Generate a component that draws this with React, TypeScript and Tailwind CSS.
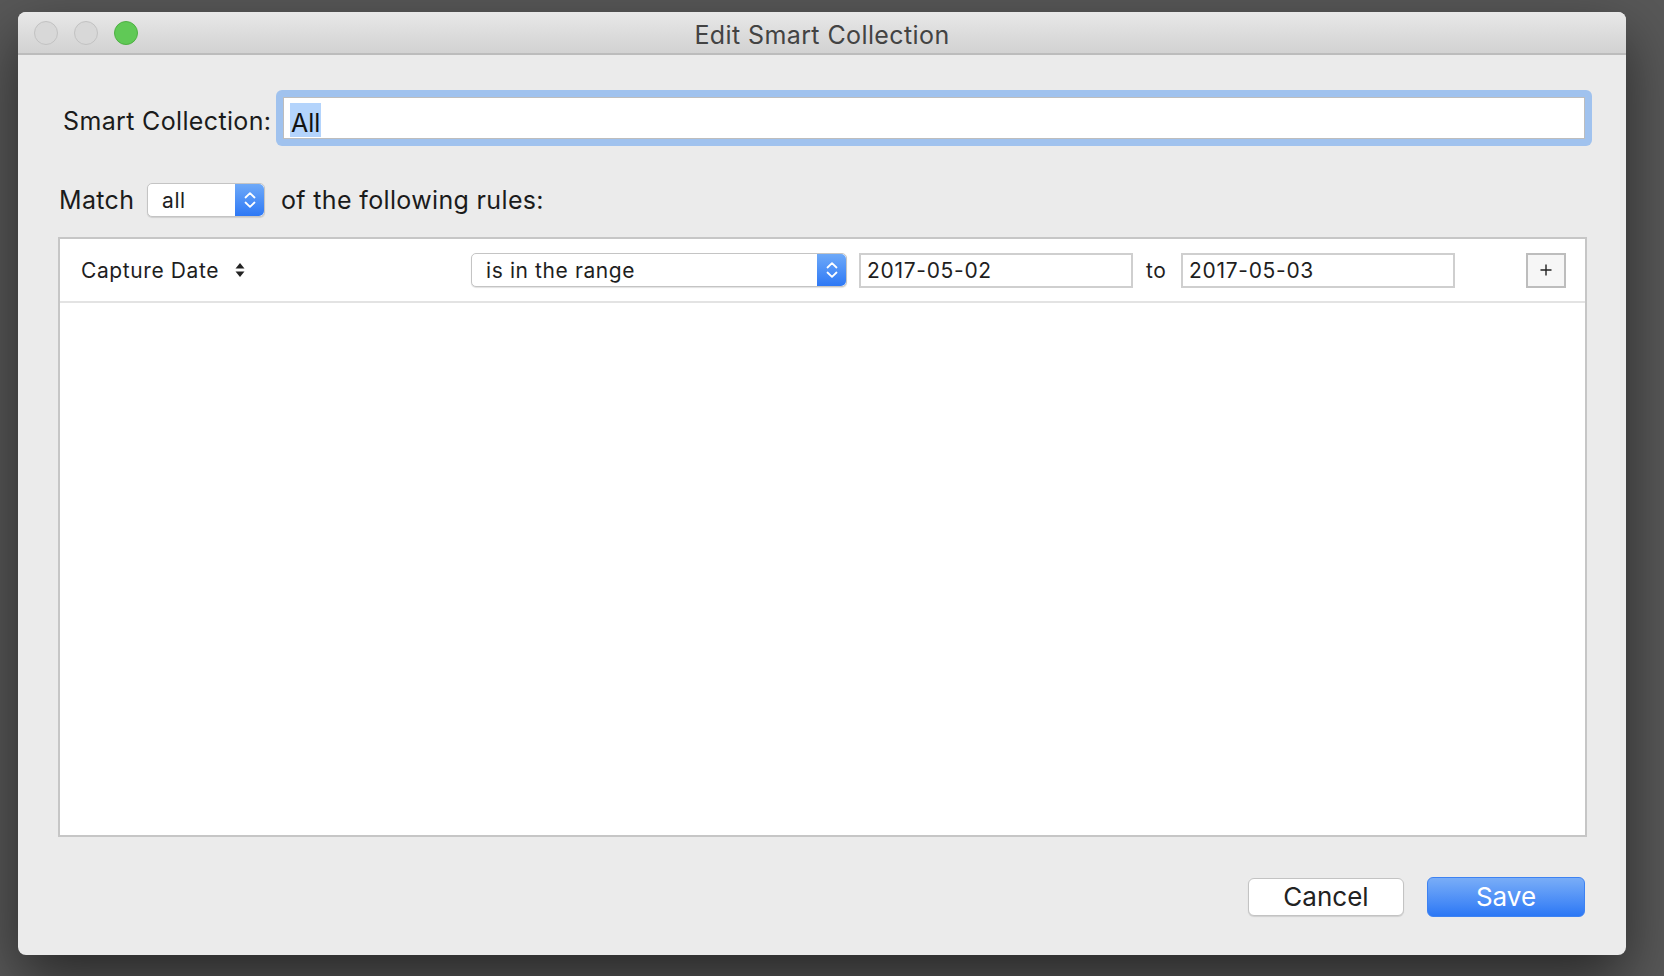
import React from 'react';

const font = { fontFamily: 'Inter, "Noto Sans", "Liberation Sans", sans-serif' };

// Blue stepper part of the macOS popup buttons
const PopupArrows: React.FC = () => (
  <div className="flex h-full w-[29px] items-center justify-center rounded-r-[5px] bg-gradient-to-b from-[#6ea9f8] to-[#2d78f5]">
    <svg width="14" height="20" viewBox="0 0 14 20" fill="none">
      <path d="M2.5 7.5 L7 3.2 L11.5 7.5" stroke="white" strokeWidth="1.8" strokeLinecap="round" strokeLinejoin="round" />
      <path d="M2.5 12.5 L7 16.8 L11.5 12.5" stroke="white" strokeWidth="1.8" strokeLinecap="round" strokeLinejoin="round" />
    </svg>
  </div>
);

const Popup: React.FC<{ label: string; width: string }> = ({ label, width }) => (
  <div
    className={`flex h-[34px] ${width} items-stretch rounded-[5px] border border-[#c4c4c4] bg-white shadow-[0_1px_1px_rgba(0,0,0,0.12)]`}
  >
    <div className="flex flex-1 items-center pl-[14px] text-[21px] leading-none tracking-[0.6px] text-[#1e1e1e]">{label}</div>
    <PopupArrows />
  </div>
);

const DateField: React.FC<{ value: string }> = ({ value }) => (
  <div className="flex h-[35px] w-[274px] items-center border-2 border-[#cfcfcf] bg-white pl-[6px] text-[21px] leading-none tracking-[0.7px] text-[#1e1e1e]">
    {value}
  </div>
);

export default function App() {
  return (
    <div className="h-[976px] w-[1664px] overflow-hidden bg-[#585858] pl-[18px] pt-[12px]" style={font}>
      <div className="flex h-[943px] w-[1608px] flex-col overflow-hidden rounded-[8px] bg-[#ebebeb] shadow-[0_24px_60px_rgba(0,0,0,0.55)]">
        {/* title bar */}
        <div className="flex h-[43px] shrink-0 items-center border-b-2 border-[#bcbcbc] bg-gradient-to-b from-[#e8e8e8] to-[#d2d2d2]">
          <div className="flex w-[120px] items-center gap-[16px] pl-[16px]">
            <span className="h-[24px] w-[24px] rounded-full border border-[#c2c2c2] bg-[#d8d8d8]" />
            <span className="h-[24px] w-[24px] rounded-full border border-[#c2c2c2] bg-[#d8d8d8]" />
            <span className="h-[24px] w-[24px] rounded-full border border-[#4eb043] bg-[#60c956]" />
          </div>
          <div className="flex-1 pt-[5px] text-center text-[25px] leading-none tracking-[0.4px] text-[#434343]">
            Edit Smart Collection
          </div>
          <div className="w-[120px]" />
        </div>

        {/* smart collection name */}
        <div className="mt-[35px] flex items-center pl-[45px] pr-[34px]">
          <span className="w-[213px] pt-[6px] text-[25px] leading-none tracking-[0.35px] text-[#1b1b1b]">Smart Collection:</span>
          <div className="flex h-[56px] flex-1 rounded-[6px] bg-[#a0c2ee] p-[7px]">
            <div className="flex flex-1 items-center border border-[#bdbdbd] bg-white pl-[6px]">
              <span className="mt-[3px] inline-block h-[34px] overflow-hidden bg-[#b4d4fc] px-[1px] text-[25px] leading-[40px] text-[#111]">
                All
              </span>
            </div>
          </div>
        </div>

        {/* match row */}
        <div className="mt-[37px] flex h-[34px] items-center pl-[41px]">
          <span className="w-[88px] text-[25px] leading-none tracking-[0.35px] text-[#1b1b1b]">Match</span>
          <Popup label="all" width="w-[118px]" />
          <span className="ml-[16px] text-[25px] leading-none tracking-[0.35px] text-[#1b1b1b]">of the following rules:</span>
        </div>

        {/* rules box */}
        <div className="ml-[40px] mr-[39px] mt-[20px] flex h-[600px] flex-col border-2 border-[#c6c6c6] bg-white">
          <div className="flex h-[64px] items-center border-b-2 border-[#e3e3e3] pl-[21px] pr-[19px]">
            <div className="flex w-[390px] items-center text-[21px] leading-none tracking-[0.6px] text-[#1e1e1e]">
              Capture Date
              <svg className="ml-[16px]" width="10" height="16" viewBox="0 0 10 16">
                <path d="M5 1 L9.5 6.5 H0.5 Z" fill="#222" />
                <path d="M5 15 L9.5 9.5 H0.5 Z" fill="#222" />
              </svg>
            </div>
            <Popup label="is in the range" width="w-[376px]" />
            <div className="ml-[12px]">
              <DateField value="2017-05-02" />
            </div>
            <span className="ml-[13px] w-[22px] text-[21px] leading-none tracking-[0.5px] text-[#1e1e1e]">to</span>
            <div className="ml-[13px]">
              <DateField value="2017-05-03" />
            </div>
            <div className="flex-1" />
            <div className="flex h-[35px] w-[40px] items-center justify-center border-2 border-[#bdbdbd] bg-[#f6f6f6]">
              <svg width="14" height="14" viewBox="0 0 14 14">
                <path d="M7 1.5 V12.5 M1.5 7 H12.5" stroke="#222" strokeWidth="1.4" />
              </svg>
            </div>
          </div>
        </div>

        {/* buttons */}
        <div className="mt-[40px] flex items-center justify-end gap-[23px] pr-[41px]">
          <button className="h-[38px] w-[156px] rounded-[6px] border border-[#c3c3c3] bg-white text-[26px] leading-none text-[#222] shadow-[0_1px_1px_rgba(0,0,0,0.12)]">
            Cancel
          </button>
          <button className="h-[40px] w-[158px] rounded-[6px] border border-[#3d82f2] bg-gradient-to-b from-[#79adf7] to-[#2b77f5] text-[26px] leading-none text-white">
            Save
          </button>
        </div>
      </div>
    </div>
  );
}
